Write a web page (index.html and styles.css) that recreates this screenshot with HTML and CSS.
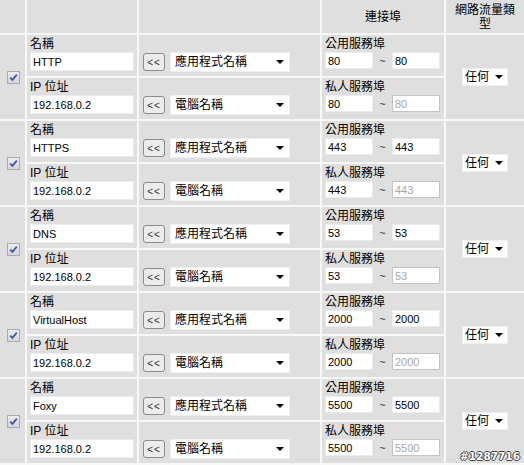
FILE: index.html
```html
<!DOCTYPE html>
<html lang="zh-Hant">
<head>
    <meta charset="UTF-8">
    <meta name="viewport" content="width=device-width, initial-scale=1.0">
    <title>連接埠轉送</title>
    <link rel="stylesheet" href="styles.css">
</head>
<body>
    <table class="rules">
        <colgroup>
            <col class="c-check">
            <col class="c-field">
            <col class="c-pick">
            <col class="c-port">
            <col class="c-type">
        </colgroup>
        <tr class="head">
            <th></th>
            <th></th>
            <th></th>
            <th>連接埠</th>
            <th>網路流量類<br>型</th>
        </tr>

        <!-- HTTP -->
        <tr>
            <td class="check" rowspan="2"><span class="box"><svg viewBox="0 0 11 11" width="11" height="11"><path d="M2.2 5.6 L4.4 7.9 L8.8 2.6" /></svg></span></td>
            <td class="field"><span class="lbl">名稱</span><input class="text" type="text" value="HTTP"></td>
            <td class="pick"><div class="pick-row"><button class="back">&lt;&lt;</button><span class="dd wide"><select><option>應用程式名稱</option></select></span></div></td>
            <td class="port"><span class="lbl">公用服務埠</span><div class="ports"><input class="num" type="text" value="80"><span class="tilde">~</span><input class="num" type="text" value="80"></div></td>
            <td class="type" rowspan="2"><span class="dd small"><select><option>任何</option></select></span></td>
        </tr>
        <tr>
            <td class="field"><span class="lbl">IP 位址</span><input class="text" type="text" value="192.168.0.2"></td>
            <td class="pick"><div class="pick-row"><button class="back">&lt;&lt;</button><span class="dd wide"><select><option>電腦名稱</option></select></span></div></td>
            <td class="port"><span class="lbl">私人服務埠</span><div class="ports"><input class="num" type="text" value="80"><span class="tilde">~</span><input class="num" type="text" value="80" disabled></div></td>
        </tr>

        <!-- HTTPS -->
        <tr>
            <td class="check" rowspan="2"><span class="box"><svg viewBox="0 0 11 11" width="11" height="11"><path d="M2.2 5.6 L4.4 7.9 L8.8 2.6" /></svg></span></td>
            <td class="field"><span class="lbl">名稱</span><input class="text" type="text" value="HTTPS"></td>
            <td class="pick"><div class="pick-row"><button class="back">&lt;&lt;</button><span class="dd wide"><select><option>應用程式名稱</option></select></span></div></td>
            <td class="port"><span class="lbl">公用服務埠</span><div class="ports"><input class="num" type="text" value="443"><span class="tilde">~</span><input class="num" type="text" value="443"></div></td>
            <td class="type" rowspan="2"><span class="dd small"><select><option>任何</option></select></span></td>
        </tr>
        <tr>
            <td class="field"><span class="lbl">IP 位址</span><input class="text" type="text" value="192.168.0.2"></td>
            <td class="pick"><div class="pick-row"><button class="back">&lt;&lt;</button><span class="dd wide"><select><option>電腦名稱</option></select></span></div></td>
            <td class="port"><span class="lbl">私人服務埠</span><div class="ports"><input class="num" type="text" value="443"><span class="tilde">~</span><input class="num" type="text" value="443" disabled></div></td>
        </tr>

        <!-- DNS -->
        <tr>
            <td class="check" rowspan="2"><span class="box"><svg viewBox="0 0 11 11" width="11" height="11"><path d="M2.2 5.6 L4.4 7.9 L8.8 2.6" /></svg></span></td>
            <td class="field"><span class="lbl">名稱</span><input class="text" type="text" value="DNS"></td>
            <td class="pick"><div class="pick-row"><button class="back">&lt;&lt;</button><span class="dd wide"><select><option>應用程式名稱</option></select></span></div></td>
            <td class="port"><span class="lbl">公用服務埠</span><div class="ports"><input class="num" type="text" value="53"><span class="tilde">~</span><input class="num" type="text" value="53"></div></td>
            <td class="type" rowspan="2"><span class="dd small"><select><option>任何</option></select></span></td>
        </tr>
        <tr>
            <td class="field"><span class="lbl">IP 位址</span><input class="text" type="text" value="192.168.0.2"></td>
            <td class="pick"><div class="pick-row"><button class="back">&lt;&lt;</button><span class="dd wide"><select><option>電腦名稱</option></select></span></div></td>
            <td class="port"><span class="lbl">私人服務埠</span><div class="ports"><input class="num" type="text" value="53"><span class="tilde">~</span><input class="num" type="text" value="53" disabled></div></td>
        </tr>

        <!-- VirtualHost -->
        <tr>
            <td class="check" rowspan="2"><span class="box"><svg viewBox="0 0 11 11" width="11" height="11"><path d="M2.2 5.6 L4.4 7.9 L8.8 2.6" /></svg></span></td>
            <td class="field"><span class="lbl">名稱</span><input class="text" type="text" value="VirtualHost"></td>
            <td class="pick"><div class="pick-row"><button class="back">&lt;&lt;</button><span class="dd wide"><select><option>應用程式名稱</option></select></span></div></td>
            <td class="port"><span class="lbl">公用服務埠</span><div class="ports"><input class="num" type="text" value="2000"><span class="tilde">~</span><input class="num" type="text" value="2000"></div></td>
            <td class="type" rowspan="2"><span class="dd small"><select><option>任何</option></select></span></td>
        </tr>
        <tr>
            <td class="field"><span class="lbl">IP 位址</span><input class="text" type="text" value="192.168.0.2"></td>
            <td class="pick"><div class="pick-row"><button class="back">&lt;&lt;</button><span class="dd wide"><select><option>電腦名稱</option></select></span></div></td>
            <td class="port"><span class="lbl">私人服務埠</span><div class="ports"><input class="num" type="text" value="2000"><span class="tilde">~</span><input class="num" type="text" value="2000" disabled></div></td>
        </tr>

        <!-- Foxy -->
        <tr>
            <td class="check" rowspan="2"><span class="box"><svg viewBox="0 0 11 11" width="11" height="11"><path d="M2.2 5.6 L4.4 7.9 L8.8 2.6" /></svg></span></td>
            <td class="field"><span class="lbl">名稱</span><input class="text" type="text" value="Foxy"></td>
            <td class="pick"><div class="pick-row"><button class="back">&lt;&lt;</button><span class="dd wide"><select><option>應用程式名稱</option></select></span></div></td>
            <td class="port"><span class="lbl">公用服務埠</span><div class="ports"><input class="num" type="text" value="5500"><span class="tilde">~</span><input class="num" type="text" value="5500"></div></td>
            <td class="type last" rowspan="2"><span class="dd small"><select><option>任何</option></select></span><span class="mark">#1287716</span></td>
        </tr>
        <tr>
            <td class="field"><span class="lbl">IP 位址</span><input class="text" type="text" value="192.168.0.2"></td>
            <td class="pick"><div class="pick-row"><button class="back">&lt;&lt;</button><span class="dd wide"><select><option>電腦名稱</option></select></span></div></td>
            <td class="port"><span class="lbl">私人服務埠</span><div class="ports"><input class="num" type="text" value="5500"><span class="tilde">~</span><input class="num" type="text" value="5500" disabled></div></td>
        </tr>
    </table>
</body>
</html>
```
FILE: styles.css
```css
html, body {
    margin: 0;
    overflow: hidden;
}
body {
    font-family: "Liberation Sans", "Noto Sans CJK TC", sans-serif;
    font-size: 12px;
    color: #000;
    background-color: #f8f8f8;
}
.rules {
    border-collapse: separate;
    border-spacing: 2px;
    margin: -2px;
    table-layout: fixed;
    width: 528px;
    background-color: #f8f8f8;
}
.c-check { width: 25px; }
.c-field { width: 110px; }
.c-pick { width: 181px; }
.c-port { width: 122px; }
.c-type { width: 78px; }

.rules th,
.rules td {
    background-color: #dfdfdf;
    padding: 0;
    box-sizing: border-box;
}
.head th {
    height: 33px;
    font-weight: normal;
    line-height: 14px;
    text-align: center;
    vertical-align: middle;
}

/* checkbox */
.check {
    text-align: center;
    vertical-align: middle;
    padding-left: 2px !important;
}
.box {
    display: inline-block;
    width: 11px;
    height: 11px;
    border: 1px solid #a4abb6;
    background: linear-gradient(#ececec, #d6d6d6);
    vertical-align: middle;
}
.box svg {
    display: block;
}
.box path {
    fill: none;
    stroke: #3a5aa8;
    stroke-width: 1.8;
}

/* name / ip fields */
.field,
.port {
    height: 41px;
    vertical-align: top;
    padding: 2px 0 0 3px !important;
}
.lbl {
    display: block;
    height: 14px;
    line-height: 14px;
    white-space: nowrap;
}
input {
    font-family: "Liberation Sans", sans-serif;
    font-size: 11px;
    color: #000;
    background-color: #fff;
    border: 1px solid #ececec;
    padding: 0 2px;
    margin: 0;
    box-sizing: border-box;
    outline: none;
}
.text {
    display: block;
    width: 104px;
    height: 19px;
    margin-top: 1px;
}
.ports {
    display: flex;
    align-items: center;
    margin-top: 1px;
}
.num {
    width: 48px;
    height: 17px;
}
.num:disabled {
    color: #a8a8a8;
    border-color: #c4c4c4;
    background-color: #fff;
}
.tilde {
    width: 19px;
    text-align: center;
    font-size: 11px;
    color: #333;
}

/* picker column */
.pick {
    vertical-align: top;
    padding: 17px 0 0 4px !important;
}
.pick-row {
    display: flex;
    align-items: center;
    gap: 5px;
    height: 20px;
}
.back {
    width: 22px;
    height: 18px;
    padding: 0;
    font-family: "Liberation Sans", sans-serif;
    font-size: 10px;
    letter-spacing: 1px;
    color: #333;
    background-color: #ececec;
    border: 1px solid #8c8c8c;
    border-radius: 3px;
}

/* dropdowns */
.dd {
    position: relative;
    display: inline-block;
}
.dd select {
    appearance: none;
    -webkit-appearance: none;
    font-family: "Liberation Sans", "Noto Sans CJK TC", sans-serif;
    font-size: 12px;
    color: #000;
    background-color: #fff;
    border: 1px solid #f0f0f0;
    border-radius: 0;
    margin: 0;
    outline: none;
    display: block;
}
.dd::after {
    content: "";
    position: absolute;
    top: 50%;
    margin-top: -2px;
    border-left: 4px solid transparent;
    border-right: 4px solid transparent;
    border-top: 4px solid #000;
    pointer-events: none;
}
.wide select {
    width: 120px;
    height: 20px;
    padding: 0 0 0 4px;
}
.wide::after {
    right: 6px;
}
.small select {
    width: 46px;
    height: 18px;
    padding: 0 0 0 2px;
}
.small::after {
    right: 5px;
}

/* traffic type */
.type {
    text-align: center;
    vertical-align: middle;
}
.last {
    position: relative;
}
.mark {
    position: absolute;
    right: 4px;
    bottom: 1px;
    font-family: "DejaVu Sans", sans-serif;
    font-weight: bold;
    font-size: 10.5px;
    color: #fff;
    text-shadow: -1px 0 #444, 1px 0 #444, 0 -1px #444, 0 1px #444;
}
```
